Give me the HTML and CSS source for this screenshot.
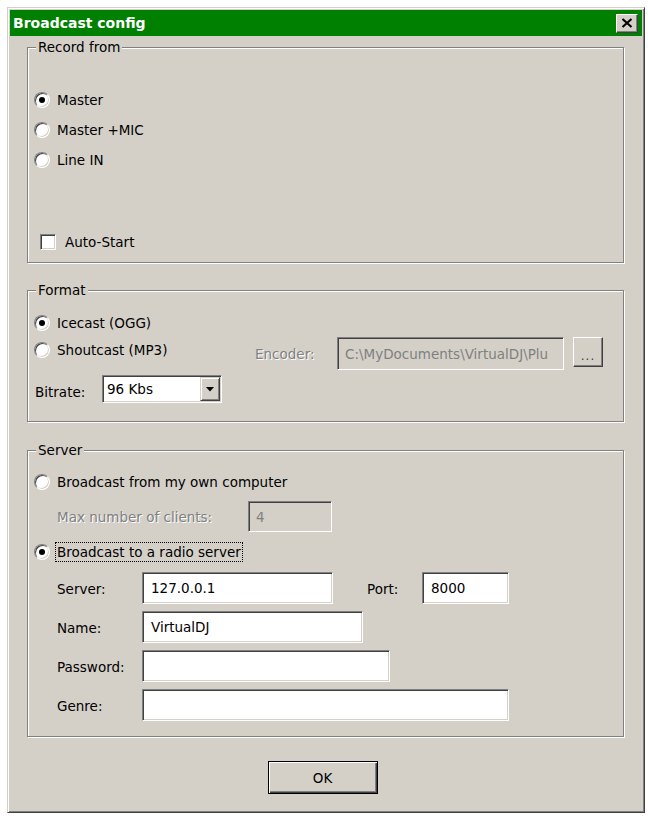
FILE: index.html
```html
<!DOCTYPE html>
<html>
<head>
<meta charset="utf-8">
<title>Broadcast config</title>
<link rel="stylesheet" href="styles.css">
</head>
<body>
<div class="window">
  <div class="titlebar">
    <span class="title">Broadcast config</span>
    <span class="close"><svg width="12" height="10" viewBox="0 0 12 10"><path d="M1.5 1 L10.5 9 M10.5 1 L1.5 9" stroke="#000" stroke-width="2.2" fill="none"/></svg></span>
  </div>
  <div class="content">
    <div class="group g-record">
      <div class="legend">Record from</div>
      <div class="radio-list">
        <div class="opt"><span class="radio on"></span><span class="lbl">Master</span></div>
        <div class="opt"><span class="radio"></span><span class="lbl">Master +MIC</span></div>
        <div class="opt"><span class="radio"></span><span class="lbl">Line IN</span></div>
      </div>
      <div class="check"><span class="checkbox"></span><span>Auto-Start</span></div>
    </div>

    <div class="group g-format">
      <div class="legend">Format</div>
      <div class="opt row-ice"><span class="radio on"></span><span class="lbl">Icecast (OGG)</span></div>
      <div class="row-shout">
        <div class="opt opt-shout"><span class="radio"></span><span class="lbl">Shoutcast (MP3)</span></div>
        <span class="disabled-lbl enc-lbl">Encoder:</span>
        <div class="field disabled enc-field"><span class="clip">C:\MyDocuments\VirtualDJ\Plu</span></div>
        <span class="btn dots">...</span>
      </div>
      <div class="row-bitrate">
        <span class="bit-lbl">Bitrate:</span>
        <div class="field select"><span>96 Kbs</span><span class="drop"><svg width="8" height="5" viewBox="0 0 8 5"><path d="M0 0 H8 L4 4.5 Z" fill="#000"/></svg></span></div>
      </div>
    </div>

    <div class="group g-server">
      <div class="legend">Server</div>
      <div class="opt row-own"><span class="radio"></span><span class="lbl">Broadcast from my own computer</span></div>
      <div class="row-max">
        <span class="disabled-lbl max-lbl">Max number of clients:</span>
        <div class="field disabled max-field"><span>4</span></div>
      </div>
      <div class="opt row-radio"><span class="radio on"></span><span class="lbl focus">Broadcast to a radio server</span></div>
      <div class="frow r1">
        <span class="flbl">Server:</span>
        <div class="field w-server"><span>127.0.0.1</span></div>
        <span class="port-lbl">Port:</span>
        <div class="field w-port"><span>8000</span></div>
      </div>
      <div class="frow">
        <span class="flbl">Name:</span>
        <div class="field w-name"><span>VirtualDJ</span></div>
      </div>
      <div class="frow">
        <span class="flbl">Password:</span>
        <div class="field w-pass"></div>
      </div>
      <div class="frow">
        <span class="flbl">Genre:</span>
        <div class="field w-genre"></div>
      </div>
    </div>

    <div class="buttons">
      <span class="btn ok">OK</span>
    </div>
  </div>
</div>
</body>
</html>
```

FILE: styles.css
```css
body {
  margin: 0;
  background: #fff;
  font-family: "DejaVu Sans", Tahoma, sans-serif;
  font-size: 13.5px;
  color: #000;
}

.window {
  box-sizing: border-box;
  width: 638px;
  height: 806px;
  margin: 7px 0 0 7px;
  background: #d4d0c8;
  border: 1px solid;
  border-color: #d4d0c8 #404040 #404040 #d4d0c8;
  padding: 2px;
  box-shadow: inset 1px 1px 0 #fff, inset -1px -1px 0 #808080;
  display: flex;
  flex-direction: column;
}

.titlebar {
  height: 26px;
  background: #008000;
  color: #fff;
  font-weight: bold;
  font-size: 14px;
  display: flex;
  align-items: center;
  justify-content: space-between;
  padding: 0 4px 0 3px;
}

.close {
  box-sizing: border-box;
  width: 22px;
  height: 19px;
  background: #d4d0c8;
  border: 1px solid;
  border-color: #fff #404040 #404040 #fff;
  box-shadow: inset -1px -1px 0 #808080;
  display: flex;
  align-items: center;
  justify-content: center;
}

.content {
  padding: 0 18px 0 17px;
  display: flex;
  flex-direction: column;
}

.group {
  border: 1px solid #808080;
  box-shadow: inset 1px 1px 0 #fff, 1px 1px 0 #fff;
  padding: 0 6px;
  display: flex;
  flex-direction: column;
}

.legend {
  align-self: flex-start;
  margin: -9px 0 0 2px;
  padding: 0 2px;
  background: #d4d0c8;
  line-height: 16px;
  height: 16px;
}

.opt {
  display: flex;
  align-items: center;
  gap: 5px;
  height: 26px;
}

.lbl {
  border: 1px solid transparent;
  padding: 0 1px;
  line-height: 18px;
  white-space: nowrap;
}

.lbl.focus {
  border: 1px dotted #000;
}

.radio {
  box-sizing: border-box;
  width: 16px;
  height: 16px;
  flex: none;
  border-radius: 50%;
  border: 1px solid;
  border-color: #808080 #fff #fff #808080;
  background: #fff;
  box-shadow: inset 1px 1px 0 #404040, inset -1px -1px 0 #d4d0c8;
  display: flex;
  align-items: center;
  justify-content: center;
}

.radio.on::after {
  content: "";
  width: 6px;
  height: 6px;
  border-radius: 50%;
  background: #000;
}

.checkbox {
  box-sizing: border-box;
  width: 16px;
  height: 16px;
  flex: none;
  border: 1px solid;
  border-color: #808080 #fff #fff #808080;
  background: #fff;
  box-shadow: inset 1px 1px 0 #404040, inset -1px -1px 0 #d4d0c8;
}

.field {
  box-sizing: border-box;
  height: 32px;
  border: 1px solid;
  border-color: #808080 #fff #fff #808080;
  box-shadow: inset 1px 1px 0 #404040, inset -1px -1px 0 #d4d0c8;
  background: #fff;
  padding: 0 4px 0 8px;
  display: flex;
  align-items: center;
  white-space: nowrap;
  overflow: hidden;
}

.field.disabled {
  background: #d4d0c8;
  color: #808080;
}

.disabled-lbl {
  color: #808080;
  text-shadow: 1px 1px 0 #fff;
  white-space: nowrap;
}

.btn {
  box-sizing: border-box;
  background: #d4d0c8;
  border: 1px solid;
  border-color: #fff #404040 #404040 #fff;
  box-shadow: inset -1px -1px 0 #808080;
  display: flex;
  align-items: center;
  justify-content: center;
}

/* Record from */
.g-record {
  margin-top: 11px;
  padding-bottom: 5px;
}

.radio-list {
  padding-top: 30px;
}

.radio-list .opt {
  height: 30px;
}

.check {
  margin: 52px 0 0 6px;
  height: 30px;
  display: flex;
  align-items: center;
  gap: 9px;
}

/* Format */
.g-format {
  margin-top: 27px;
  padding-bottom: 18px;
}

.row-ice {
  margin-top: 12px;
}

.row-shout {
  margin-top: 1px;
  height: 33px;
  display: flex;
  align-items: center;
}

.opt-shout {
  width: 221px;
  flex: none;
  margin-bottom: 7px;
}

.enc-lbl {
  width: 82px;
  flex: none;
}

.enc-field {
  width: 227px;
  height: 33px;
  padding-left: 7px;
}

.dots {
  width: 30px;
  height: 30px;
  margin: 0 0 3px 9px;
  font-size: 12px;
  color: #404040;
  padding-top: 8px;
  letter-spacing: 1px;
}

.row-bitrate {
  margin-top: 5px;
  display: flex;
  align-items: center;
}

.bit-lbl {
  width: 67px;
  margin: 5px 0 0 1px;
}

.select {
  width: 120px;
  height: 28px;
  padding: 0 1px 0 4px;
}

.drop {
  box-sizing: border-box;
  margin-left: auto;
  width: 20px;
  height: 24px;
  background: #d4d0c8;
  border: 1px solid;
  border-color: #d4d0c8 #404040 #404040 #d4d0c8;
  box-shadow: inset 1px 1px 0 #fff, inset -1px -1px 0 #808080;
  display: flex;
  align-items: center;
  justify-content: center;
}

/* Server */
.g-server {
  margin-top: 28px;
  padding-bottom: 15px;
}

.row-own {
  margin-top: 11px;
}

.row-max {
  margin-top: 6px;
  display: flex;
  align-items: center;
}

.max-lbl {
  margin-left: 23px;
  width: 191px;
}

.max-field {
  width: 84px;
  height: 31px;
  padding-left: 7px;
}

.row-radio {
  margin-top: 7px;
}

.frow {
  margin-top: 7px;
  display: flex;
  align-items: center;
}

.flbl {
  margin-left: 23px;
  width: 85px;
  flex: none;
  padding-top: 2px;
}

.port-lbl {
  margin-left: 34px;
  width: 55px;
  padding-top: 2px;
}

.w-server { width: 191px; }
.w-port { width: 87px; }
.w-name { width: 221px; }
.w-pass { width: 248px; }
.w-genre { width: 367px; }

/* Buttons */
.buttons {
  margin-top: 24px;
  display: flex;
  justify-content: center;
  padding-right: 6px;
}

.ok {
  width: 110px;
  height: 33px;
  border: 1px solid #000;
  box-shadow: inset 1px 1px 0 #fff, inset -1px -1px 0 #404040, inset -2px -2px 0 #808080;
}
```
